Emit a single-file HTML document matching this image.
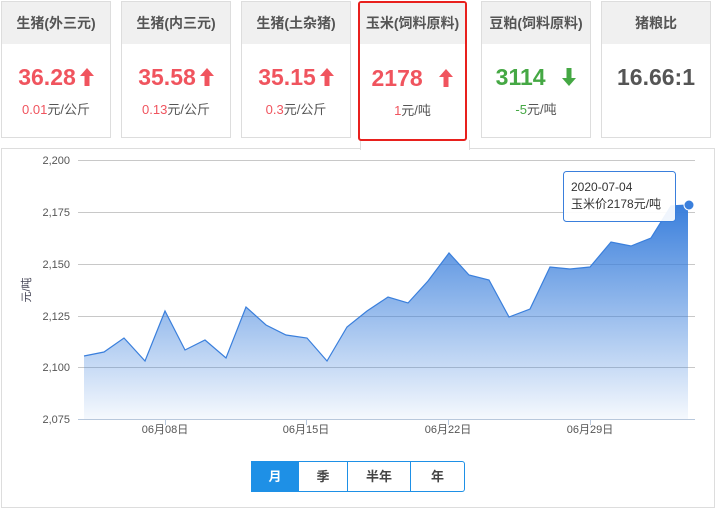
<!DOCTYPE html>
<html><head><meta charset="utf-8"><style>
*{margin:0;padding:0;box-sizing:border-box}
body{width:721px;height:499px;background:#fff;font-family:"Liberation Sans","Noto Sans CJK SC",sans-serif;position:relative;overflow:hidden}
.card{position:absolute;top:1px;width:110px;height:137px;border:1px solid #ddd;background:#fff;text-align:center}
.card .h{height:42px;background:#f0f0f0;line-height:42px;font-size:14px;color:#555;font-weight:bold}
.card .v{margin-top:20px;font-size:23px;font-weight:bold;line-height:26px}
.card .s{margin-top:9px;font-size:13px;color:#555}
.r{color:#f0545e}.g{color:#45a844}
.v svg{vertical-align:-1px;margin-left:4px}
.btn{position:absolute;top:461px;height:31px;line-height:29px;text-align:center;font-size:13px;color:#444;font-weight:bold;border:1px solid #1e90e6;border-left:none;background:#fff}
</style></head><body>
<div class="card" style="left:1px"><div class="h">生猪(外三元)</div><div class="v r">36.28<svg width="14" height="18" viewBox="0 0 14 18"><path d="M7 0 L14 8 L9.5 8 L9.5 18 L4.5 18 L4.5 8 L0 8Z" fill="#f0545e"/></svg></div><div class="s"><span class="r">0.01</span>元/公斤</div></div>
<div class="card" style="left:121px"><div class="h">生猪(内三元)</div><div class="v r">35.58<svg width="14" height="18" viewBox="0 0 14 18"><path d="M7 0 L14 8 L9.5 8 L9.5 18 L4.5 18 L4.5 8 L0 8Z" fill="#f0545e"/></svg></div><div class="s"><span class="r">0.13</span>元/公斤</div></div>
<div class="card" style="left:241px"><div class="h">生猪(土杂猪)</div><div class="v r">35.15<svg width="14" height="18" viewBox="0 0 14 18"><path d="M7 0 L14 8 L9.5 8 L9.5 18 L4.5 18 L4.5 8 L0 8Z" fill="#f0545e"/></svg></div><div class="s"><span class="r">0.3</span>元/公斤</div></div>
<div class="card" style="left:481px"><div class="h">豆粕(饲料原料)</div><div class="v g">3114 &nbsp;<svg width="14" height="18" viewBox="0 0 14 18"><path d="M7 18 L14 10 L9.5 10 L9.5 0 L4.5 0 L4.5 10 L0 10Z" fill="#45a844"/></svg></div><div class="s"><span class="g">-5</span>元/吨</div></div>
<div class="card" style="left:601px"><div class="h">猪粮比</div><div class="v" style="color:#555">16.66:1</div></div>
<div style="position:absolute;left:1px;top:148px;width:714px;height:360px;border:1px solid #ddd"></div>
<div style="position:absolute;left:360px;top:140px;width:110px;height:10px;background:#fff;border-left:1px solid #ddd;border-right:1px solid #ddd"></div>
<div style="position:absolute;left:358px;top:1px;width:109px;height:140px;border:2px solid #e8201d;border-radius:3px;z-index:2;text-align:center;overflow:hidden">
<div style="height:41px;background:#f0f0f0;line-height:41px;font-size:14px;color:#555;font-weight:bold">玉米(饲料原料)</div>
<div class="v r" style="margin-top:21px;font-size:23px;font-weight:bold;line-height:26px">2178 &nbsp;<svg width="14" height="18" viewBox="0 0 14 18"><path d="M7 0 L14 8 L9.5 8 L9.5 18 L4.5 18 L4.5 8 L0 8Z" fill="#f0545e"/></svg></div>
<div style="margin-top:9px;font-size:13px;color:#555"><span class="r">1</span>元/吨</div></div>
<svg style="position:absolute;left:0;top:0" width="721" height="499">
<defs><linearGradient id="gr" x1="0" y1="0" x2="0" y2="1"><stop offset="0" stop-color="#3a7fdc"/><stop offset="1" stop-color="#3a7fdc" stop-opacity="0.05"/></linearGradient></defs>
<g stroke="#c8c8c8" stroke-width="1">
<line x1="78" y1="160.5" x2="695" y2="160.5"/><line x1="78" y1="212.5" x2="695" y2="212.5"/><line x1="78" y1="264.5" x2="695" y2="264.5"/><line x1="78" y1="316.5" x2="695" y2="316.5"/><line x1="78" y1="367.5" x2="695" y2="367.5"/></g>
<path d="M84,356 L104,352 L124,338 L145,361 L165,311 L185,350 L205,340 L226,358 L246,307 L266,325 L286,335 L307,338 L327,361 L347,327 L367,311 L388,297 L408,303 L428,281 L449,253 L469,275 L489,280 L509,317 L530,309 L550,267 L570,269 L590,267 L611,242 L631,246 L651,238 L671,206 L688,205 L688,419 L84,419 Z" fill="url(#gr)"/>
<path d="M84,356 L104,352 L124,338 L145,361 L165,311 L185,350 L205,340 L226,358 L246,307 L266,325 L286,335 L307,338 L327,361 L347,327 L367,311 L388,297 L408,303 L428,281 L449,253 L469,275 L489,280 L509,317 L530,309 L550,267 L570,269 L590,267 L611,242 L631,246 L651,238 L671,206 L688,205" fill="none" stroke="#3a7fdc" stroke-width="1.2"/>
<line x1="78" y1="419.5" x2="695" y2="419.5" stroke="#b8c8dc"/>
<g stroke="#b8c8dc"><line x1="165.5" y1="419" x2="165.5" y2="425"/><line x1="306.5" y1="419" x2="306.5" y2="425"/><line x1="448.5" y1="419" x2="448.5" y2="425"/><line x1="590.5" y1="419" x2="590.5" y2="425"/></g>
<circle cx="689" cy="205" r="5" fill="#3a7fdc" stroke="#fff" stroke-width="1"/>
<g font-size="11" fill="#555" text-anchor="end" font-family="Liberation Sans,sans-serif">
<text x="70" y="164">2,200</text><text x="70" y="216">2,175</text><text x="70" y="268">2,150</text><text x="70" y="320">2,125</text><text x="70" y="371">2,100</text><text x="70" y="423">2,075</text></g>
<g font-size="11" fill="#555" text-anchor="middle" font-family="Liberation Sans,Noto Sans CJK SC,sans-serif">
<text x="165" y="433">06月08日</text><text x="306" y="433">06月15日</text><text x="448" y="433">06月22日</text><text x="590" y="433">06月29日</text></g>
<text transform="translate(30,290) rotate(-90)" font-size="11" fill="#445" text-anchor="middle" font-family="Liberation Sans,Noto Sans CJK SC,sans-serif">元/吨</text>
<rect x="563.5" y="171.5" width="112" height="50" rx="3" fill="#fff" fill-opacity="0.92" stroke="#3a7fdc"/>
<text x="571" y="191" font-size="12" fill="#333" font-family="Liberation Sans,sans-serif">2020-07-04</text>
<text x="571" y="208" font-size="12" fill="#333" font-family="Liberation Sans,Noto Sans CJK SC,sans-serif">玉米价2178元/吨</text>
</svg>
<div class="btn" style="left:251px;width:48px;background:#1e90e6;color:#fff;border-left:1px solid #1e90e6">月</div>
<div class="btn" style="left:299px;width:49px">季</div>
<div class="btn" style="left:348px;width:63px">半年</div>
<div class="btn" style="left:411px;width:54px;border-radius:0 3px 3px 0">年</div>
</body></html>
